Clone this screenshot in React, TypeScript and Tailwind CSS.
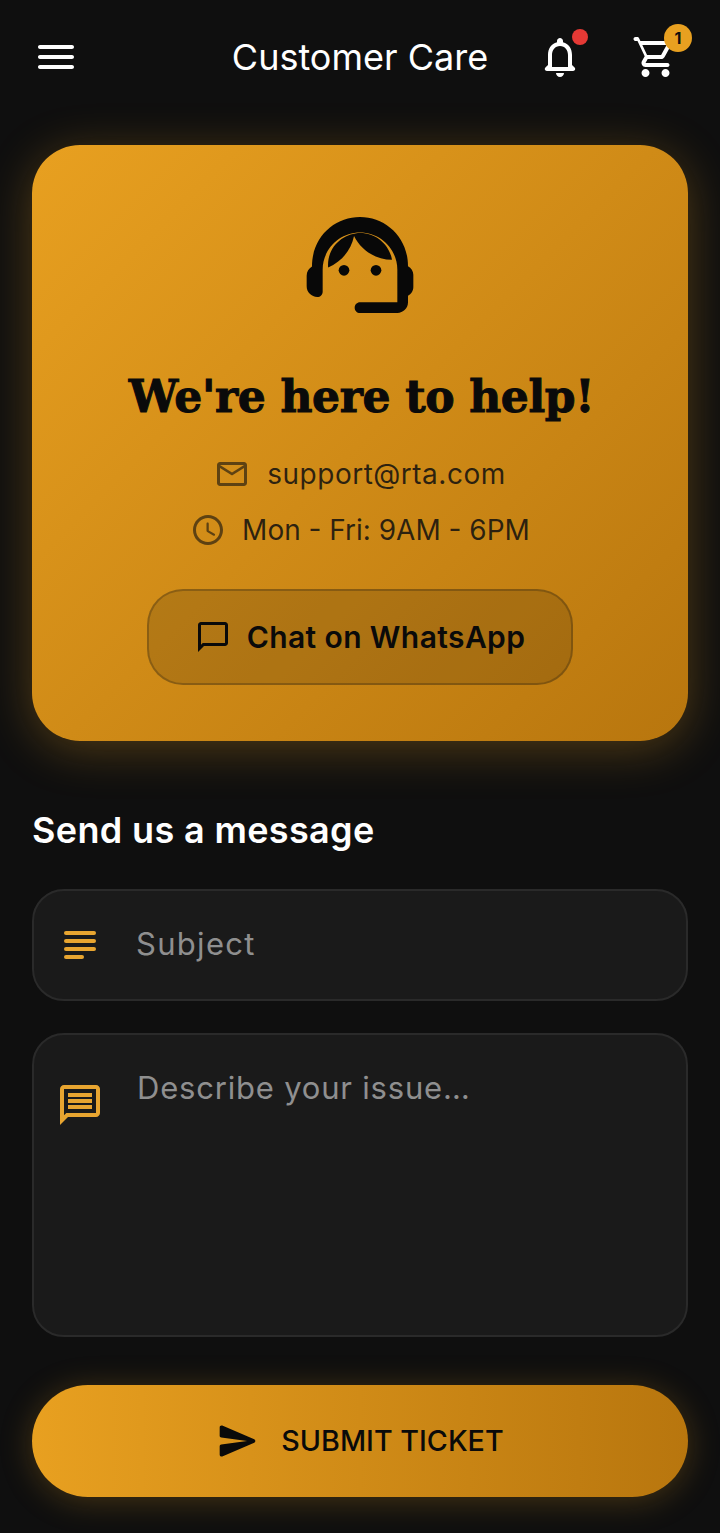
const sans = { fontFamily: "Inter, sans-serif" };

function MenuIcon() {
  return (
    <svg viewBox="0 0 24 24" className="h-12 w-12 fill-white">
      <path d="M4 18h16c.55 0 1-.45 1-1s-.45-1-1-1H4c-.55 0-1 .45-1 1s.45 1 1 1zm0-5h16c.55 0 1-.45 1-1s-.45-1-1-1H4c-.55 0-1 .45-1 1s.45 1 1 1zM3 7c0 .55.45 1 1 1h16c.55 0 1-.45 1-1s-.45-1-1-1H4c-.55 0-1 .45-1 1z" />
    </svg>
  );
}

function BellIcon() {
  return (
    <svg viewBox="0 0 24 24" className="h-12 w-12 fill-white">
      <path d="M19.29 17.29L18 16v-5c0-3.07-1.64-5.64-4.5-6.32V4c0-.83-.67-1.5-1.5-1.5s-1.5.67-1.5 1.5v.68C7.63 5.36 6 7.92 6 11v5l-1.29 1.29c-.63.63-.19 1.71.7 1.71h13.17c.9 0 1.34-1.08.71-1.71zM16 17H8v-6c0-2.48 1.51-4.5 4-4.5s4 2.02 4 4.5v6zm-4 5c1.1 0 2-.9 2-2h-4c0 1.1.9 2 2 2z" />
    </svg>
  );
}

function CartIcon() {
  return (
    <svg viewBox="0 0 24 24" className="h-12 w-12 fill-white">
      <path d="M15.55 13c.75 0 1.41-.41 1.75-1.03l3.58-6.49c.37-.66-.11-1.48-.87-1.48H5.21l-.67-1.43c-.16-.35-.52-.57-.9-.57H2.75c-.55 0-1 .45-1 1s.45 1 1 1h1l3.6 7.59-1.35 2.44C5.27 15.37 6.23 17 7.75 17h11c.55 0 1-.45 1-1s-.45-1-1-1h-11l1.1-2h6.7zM6.16 6h12.15l-2.76 5H8.53L6.16 6zM7.75 18c-1.1 0-1.99.9-1.99 2s.89 2 1.99 2 2-.9 2-2-.9-2-2-2zm10 0c-1.1 0-1.99.9-1.99 2s.89 2 1.99 2 2-.9 2-2-.9-2-2-2z" />
    </svg>
  );
}

function AgentIcon() {
  return (
    <svg viewBox="0 0 24 24" className="h-32 w-32 fill-[#080808]">
      <path d="M21 12.22C21 6.73 16.74 3 12 3c-4.69 0-9 3.65-9 9.28-.6.34-1 .98-1 1.72v2c0 1.1.9 2 2 2 .55 0 1-.45 1-1v-4.1c0-3.87 3.13-7 7-7s7 3.13 7 7V19h-7c-.55 0-1 .45-1 1s.45 1 1 1h7c1.1 0 2-.9 2-2v-1.22c.59-.31 1-.92 1-1.64v-2.3c0-.7-.41-1.31-1-1.62z" />
      <circle cx="9" cy="13" r="1" />
      <circle cx="15" cy="13" r="1" />
      <path d="M18 11.03C17.52 8.18 15.04 6 12.05 6c-3.03 0-6.29 2.51-6.03 6.45 2.47-1.01 4.33-3.21 4.86-5.89 1.31 2.63 4 4.44 7.12 4.47z" />
    </svg>
  );
}

function MailIcon() {
  return (
    <svg viewBox="0 0 24 24" className="h-9 w-9 fill-[#0f0f0f]/60">
      <path d="M20 4H4c-1.1 0-1.99.9-1.99 2L2 18c0 1.1.9 2 2 2h16c1.1 0 2-.9 2-2V6c0-1.1-.9-2-2-2zm-.4 14H4.4c-.22 0-.4-.18-.4-.4V8l7.47 4.67c.32.2.74.2 1.06 0L20 8v9.6c0 .22-.18.4-.4.4zM12 11 4 6h16l-8 5z" />
    </svg>
  );
}

function ClockIcon() {
  return (
    <svg viewBox="0 0 24 24" className="h-9 w-9 fill-[#0f0f0f]/60">
      <path d="M11.99 2C6.47 2 2 6.48 2 12s4.47 10 9.99 10C17.52 22 22 17.52 22 12S17.52 2 11.99 2zM12 20c-4.42 0-8-3.58-8-8s3.58-8 8-8 8 3.58 8 8-3.58 8-8 8zm-.22-13h-.06c-.4 0-.72.32-.72.72v4.72c0 .35.18.68.49.86l4.15 2.49c.34.2.78.1.98-.24.21-.34.1-.79-.25-.99l-3.87-2.3V7.72c0-.4-.32-.72-.72-.72z" />
    </svg>
  );
}

function ChatIcon() {
  return (
    <svg viewBox="0 0 24 24" className="h-9 w-9 fill-[#0a0a0a]">
      <path d="M20 2H4c-1.1 0-2 .9-2 2v18l4-4h14c1.1 0 2-.9 2-2V4c0-1.1-.9-2-2-2zm0 14H5.17L4 17.17V4h16v12z" />
    </svg>
  );
}

function SubjectIcon() {
  return (
    <svg viewBox="0 0 32 28" className="h-7 w-8 fill-[#e8a530]">
      <rect x="0" y="0" width="32" height="4" rx="2" />
      <rect x="0" y="8" width="32" height="4" rx="2" />
      <rect x="0" y="16" width="32" height="4" rx="2" />
      <rect x="0" y="24" width="20" height="4" rx="2" />
    </svg>
  );
}

function MessageIcon() {
  return (
    <svg viewBox="0 0 24 24" className="h-12 w-12 fill-[#e8a530]">
      <path d="M20 2H4c-1.1 0-2 .9-2 2v18l4-4h14c1.1 0 2-.9 2-2V4c0-1.1-.9-2-2-2zm0 14H5.17L4 17.17V4h16v12z" />
      <path d="M6 6h12v2H6zM6 9h12v2H6zM6 12h12v2H6z" />
    </svg>
  );
}

function SendIcon() {
  return (
    <svg viewBox="0 0 24 24" className="h-11 w-11 fill-[#0a0a0a]">
      <path d="M3.4 20.4l17.45-7.48c.81-.35.81-1.49 0-1.84L3.4 3.6c-.66-.29-1.39.2-1.39.91L2 9.12c0 .5.37.93.87.99L17 12 2.87 13.88c-.5.07-.87.5-.87 1l.01 4.61c0 .71.73 1.2 1.39.91z" />
    </svg>
  );
}

export default function App() {
  return (
    <div className="h-[1533px] bg-[#0f0f0f] px-8 pt-[33px]" style={sans}>
      {/* top bar */}
      <div className="grid h-12 grid-cols-[1fr_auto_1fr] grid-rows-[48px] items-center">
        <MenuIcon />
        <p className="text-[36px] font-normal leading-[50px] text-white">Customer Care</p>
        <div className="flex justify-end gap-[46px] pr-[10px]">
          <div className="relative">
            <BellIcon />
            <span className="absolute left-[36px] top-[-4px] h-4 w-4 rounded-full bg-[#e53935]" />
          </div>
          <div className="relative">
            <CartIcon />
            <span className="absolute left-[34px] top-[-9px] flex h-7 w-7 items-center justify-center rounded-full bg-[#e8a020] text-base font-bold text-[#0f0f0f]">
              1
            </span>
          </div>
        </div>
      </div>

      {/* help card */}
      <div className="mt-[64px] flex h-[596px] flex-col items-center rounded-[48px] bg-[linear-gradient(135deg,#e8a020,#b8760e)] pt-14 shadow-[0_8px_48px_rgba(232,160,32,0.3)]">
        <AgentIcon />
        <h1
          className="mt-[36px] whitespace-nowrap pl-[3px] text-[44px] font-bold leading-[64px] tracking-[-0.35px] text-[#0a0a0a] [-webkit-text-stroke:1px_#0a0a0a]"
          style={{ fontFamily: '"DejaVu Serif", serif' }}
        >
          We're here to help!
        </h1>
        <div className="mt-[25px] flex items-center gap-[17px] text-[#0f0f0f]/85">
          <MailIcon />
          <span className="text-[28px] font-normal leading-10 tracking-[0.5px]">support@rta.com</span>
        </div>
        <div className="mt-4 flex items-center gap-4 text-[#0f0f0f]/85">
          <ClockIcon />
          <span className="text-[28px] font-normal leading-10">Mon - Fri: 9AM - 6PM</span>
        </div>
        <button className="mt-[39px] flex h-24 w-[426px] items-center justify-center gap-4 rounded-[36px] border-2 border-[#0f0f0f]/25 bg-[#0f0f0f]/15 text-[30px] font-semibold tracking-[0.4px] text-[#0a0a0a]">
          <ChatIcon />
          Chat on WhatsApp
        </button>
      </div>

      {/* form */}
      <h2 className="mt-[67px] text-[36px] font-semibold leading-[44px] tracking-[0.35px] text-white">
        Send us a message
      </h2>
      <div className="mt-[37px] flex h-28 items-center rounded-[32px] border-2 border-[#2a2a2a] bg-[#1a1a1a] pl-[30px]">
        <SubjectIcon />
        <input
          placeholder="Subject"
          className="mb-[2px] ml-[40px] flex-1 bg-transparent text-[31px] tracking-[1.3px] outline-none placeholder:text-[#8f8f8f]"
        />
      </div>
      <div className="mt-[32px] flex h-[304px] rounded-[32px] border-2 border-[#2a2a2a] bg-[#1a1a1a] pl-[22px] pt-[46px]">
        <div className="h-12 w-12 shrink-0">
          <MessageIcon />
        </div>
        <textarea
          placeholder="Describe your issue…"
          className="-mt-[17px] ml-[33px] h-[200px] flex-1 resize-none bg-transparent text-[31px] leading-[48px] tracking-[0.8px] outline-none placeholder:text-[#8f8f8f]"
        />
      </div>

      <button className="mt-[48px] flex h-28 w-full items-center justify-center gap-[21px] rounded-full bg-[linear-gradient(90deg,#e8a020,#b8760e)] text-[28.7px] font-medium text-[#0a0a0a] shadow-[0_4px_32px_rgba(232,160,32,0.25)]">
        <SendIcon />
        SUBMIT TICKET
      </button>
    </div>
  );
}
